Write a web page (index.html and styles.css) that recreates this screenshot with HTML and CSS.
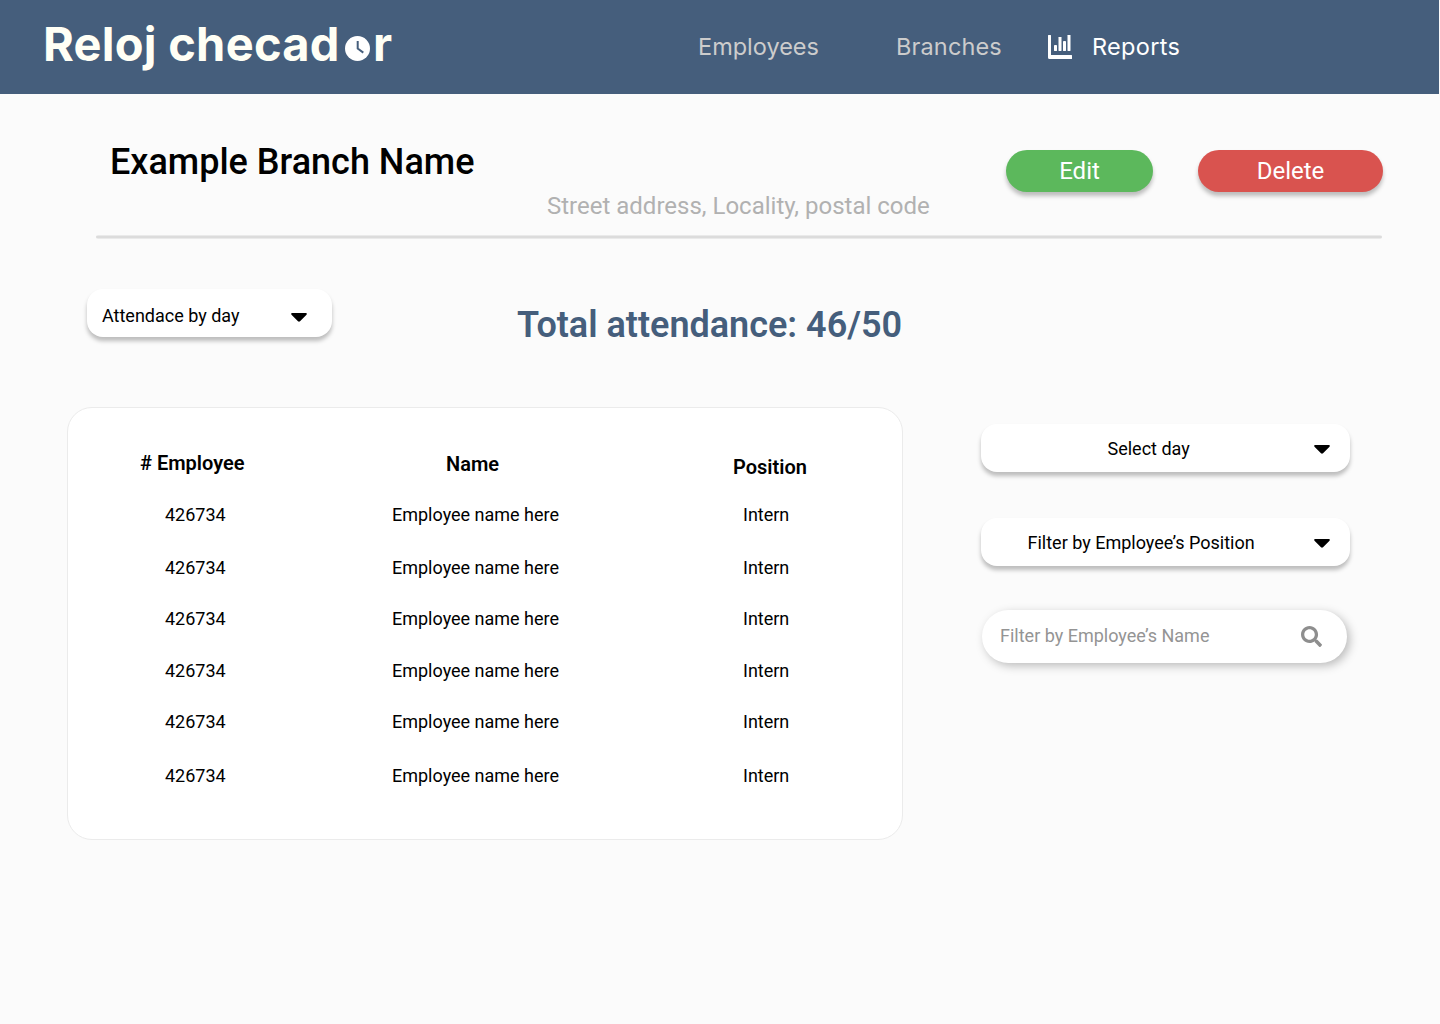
FILE: index.html
```html
<!DOCTYPE html>
<html lang="en">
<head>
<meta charset="utf-8">
<title>Reloj checador</title>
<link rel="stylesheet" href="styles.css">
</head>
<body>
<header class="topbar">
  <div class="logo">
    <span class="logo-main">Reloj checad</span>
    <svg class="logo-clock" viewBox="0 0 25 25"><circle cx="12.5" cy="12.5" r="12.5" fill="#fff"/><path d="M12.7 5v7.600l5.600 4" fill="none" stroke="#455e7c" stroke-width="2"/></svg>
    <span class="logo-end">r</span>
  </div>
  <nav class="nav">
    <a class="nav-link employees">Employees</a>
    <a class="nav-link branches">Branches</a>
    <svg class="nav-icon" viewBox="0 0 24 24"><path d="M0 .5a.5.500 0 0 1 .5-.5h2a.5.500 0 0 1 .5.500V20h20.500a.5.500 0 0 1 .5.500v3a.5.500 0 0 1-.5.500H1.500A1.500 1.500 0 0 1 0 22.500z"/><rect x="6" y="10" width="3" height="6" rx=".4"/><rect x="10.500" y="2" width="3" height="14" rx=".4"/><rect x="15" y="6" width="3" height="10" rx=".4"/><rect x="19.500" y="0" width="3" height="16" rx=".4"/></svg>
    <a class="nav-link reports">Reports</a>
  </nav>
</header>
<main>
  <section class="branch">
    <h1 class="branch-name">Example Branch Name</h1>
    <p class="address">Street address, Locality, postal code</p>
    <div class="actions">
      <button class="btn edit">Edit</button>
      <button class="btn delete">Delete</button>
    </div>
  </section>
  <hr class="divider">
  <section class="summary">
    <div class="select mode"><span>Attendace by day</span><svg class="caret" viewBox="0 0 16 9"><path d="M1.300 0h13.400c1 0 1.500 1 .8 1.700L9 8.200c-.6.600-1.400.6-2 0L.5 1.700C-.2 1 .3 0 1.300 0z"/></svg></div>
    <h2 class="total">Total attendance: 46/50</h2>
  </section>
  <section class="content">
    <div class="card">
      <div class="row head"><span class="c1">#&nbsp;Employee</span><span class="c2">Name</span><span class="c3">Position</span></div>
      <div class="row r53"><span class="c1">426734</span><span class="c2">Employee name here</span><span class="c3">Intern</span></div>
      <div class="row r51"><span class="c1">426734</span><span class="c2">Employee name here</span><span class="c3">Intern</span></div>
      <div class="row r52"><span class="c1">426734</span><span class="c2">Employee name here</span><span class="c3">Intern</span></div>
      <div class="row r51"><span class="c1">426734</span><span class="c2">Employee name here</span><span class="c3">Intern</span></div>
      <div class="row r54"><span class="c1">426734</span><span class="c2">Employee name here</span><span class="c3">Intern</span></div>
      <div class="row"><span class="c1">426734</span><span class="c2">Employee name here</span><span class="c3">Intern</span></div>
    </div>
    <aside class="filters">
      <div class="select day"><span>Select day</span><svg class="caret" viewBox="0 0 16 9"><path d="M1.300 0h13.400c1 0 1.500 1 .8 1.700L9 8.200c-.6.600-1.400.6-2 0L.5 1.700C-.2 1 .3 0 1.300 0z"/></svg></div>
      <div class="select position"><span>Filter by Employee’s Position</span><svg class="caret" viewBox="0 0 16 9"><path d="M1.300 0h13.400c1 0 1.500 1 .8 1.700L9 8.200c-.6.600-1.400.6-2 0L.5 1.700C-.2 1 .3 0 1.300 0z"/></svg></div>
      <div class="search"><span>Filter by Employee’s Name</span><svg class="glass" viewBox="0 0 512 512"><path d="M505 442.700L405.300 343c-4.500-4.500-10.600-7-17-7H372c27.600-35.300 44-79.700 44-128C416 93.100 322.900 0 208 0S0 93.100 0 208s93.100 208 208 208c48.300 0 92.700-16.400 128-44v16.300c0 6.400 2.500 12.500 7 17l99.700 99.700c9.400 9.400 24.600 9.400 33.900 0l28.300-28.300c9.400-9.400 9.400-24.600.1-34zM208 336c-70.700 0-128-57.200-128-128 0-70.700 57.200-128 128-128 70.700 0 128 57.200 128 128 0 70.700-57.200 128-128 128z"/></svg></div>
    </aside>
  </section>
</main>
</body>
</html>
```
FILE: styles.css
```css
* { box-sizing: border-box; }
body {
  margin: 0;
  min-height: 1024px;
  background: #fbfbfb;
  color: #000;
  font-family: Roboto, sans-serif;
  font-size: 18px;
}
h1, h2, p { margin: 0; }
span, a, h1, h2, p { white-space: nowrap; }
svg { display: block; flex: none; }

.topbar {
  display: flex;
  width: 1439px;
  height: 94px;
  background: #455e7c;
  font-family: Inter, Roboto, sans-serif;
}
.logo {
  display: flex;
  width: 655px;
  padding-left: 43px;
  color: #fffff5;
  font-size: 47px;
  font-weight: 700;
  line-height: 88px;
}
.logo-main { width: 302px; letter-spacing: .25px; }
.logo-clock { width: 25px; height: 25px; margin-top: 36px; }
.logo-end { margin-left: 3px; }
.nav {
  display: flex;
  color: #fff;
  font-size: 23.500px;
  line-height: 94px;
}
.employees { width: 199px; padding-left: 43px; color: #ccc; }
.branches { width: 194px; padding-left: 42px; color: #ccc; letter-spacing: .15px; }
.reports { padding-left: 20px; letter-spacing: .3px; }
.nav-icon { width: 24px; height: 24px; margin-top: 35px; fill: #fff; }

.branch {
  display: flex;
  width: 1288px;
  height: 141px;
  margin-left: 95px;
}
.divider {
  width: 1286px;
  height: 4px;
  margin: 0 0 0 96px;
  border: 0;
  border-radius: 2px;
  background: linear-gradient(#eaeaea 1px, #dcdcdc 1px 3px, #eaeaea 3px);
}
.branch-name {
  width: 452px;
  padding-left: 15px;
  font-size: 36px;
  font-weight: 500;
  line-height: 42px;
  padding-top: 47px;
}
.address {
  width: 459px;
  padding-top: 98px;
  color: #b1b1b1;
  font-size: 24px;
  line-height: 28px;
}
.actions { display: flex; flex: none; gap: 45px; padding-top: 56px; }
.btn {
  height: 42px;
  padding: 0;
  border: 0;
  border-radius: 21px;
  color: #fff;
  font: 400 24px/42px Roboto, sans-serif;
  box-shadow: 0 4px 4px rgba(0, 0, 0, .25);
}
.edit { width: 147px; background: #5cb85c; }
.delete { width: 185px; background: #d9534f; }

.summary { display: flex; height: 168px; padding: 50px 0 0 87px; }
.select {
  display: flex;
  align-items: center;
  height: 48px;
  border-radius: 16px;
  background: #fff;
  box-shadow: 0 4px 4px rgba(0, 0, 0, .25);
}
.caret { width: 16px; height: 9px; }
.mode { width: 245px; justify-content: space-between; padding: 4px 25px 0 15px; }
.mode .caret { margin-top: 4px; }
.total {
  margin-left: 185px;
  padding-top: 15px;
  color: #455e7c;
  font-size: 36px;
  font-weight: 600;
  line-height: 42px;
}

.content { display: flex; padding-left: 67px; }
.card {
  width: 836px;
  height: 433px;
  padding-top: 45px;
  border: 1px solid #ebebeb;
  border-radius: 25px;
  background: #fff;
}
.row {
  display: grid;
  grid-template-columns: 227px 351px 1fr;
  height: 52px;
  padding-left: 97px;
  line-height: 24px;
}
.head {
  grid-template-columns: 306px 287px 1fr;
  height: 50px;
  padding-left: 72px;
  font-size: 20px;
  font-weight: 600;
}
.head .c1 { margin-top: -2px; }
.head .c2 { margin-top: -1px; }
.head .c3 { margin-top: 2px; }
.r51 { height: 51px; }
.r52 { height: 52px; }
.r53 { height: 53px; }
.r54 { height: 54px; }

.filters { width: 369px; margin: 17px 0 0 78px; }
.day, .position { justify-content: space-between; padding: 0 20px 0 126.500px; }
.day .caret, .position .caret { margin-top: 2px; }
.position { margin-top: 46px; padding-left: 46.500px; }
.search {
  display: flex;
  align-items: center;
  justify-content: space-between;
  width: 365px;
  height: 53px;
  margin: 44px 0 0 1px;
  padding: 0 25px 0 18px;
  border-radius: 26.500px;
  background: #fff;
  color: #949494;
  box-shadow: 3px 3px 10px rgba(0, 0, 0, .25);
}
.search span { margin-top: -2px; }
.glass { width: 21px; height: 21px; fill: #8e8e8e; }
```
